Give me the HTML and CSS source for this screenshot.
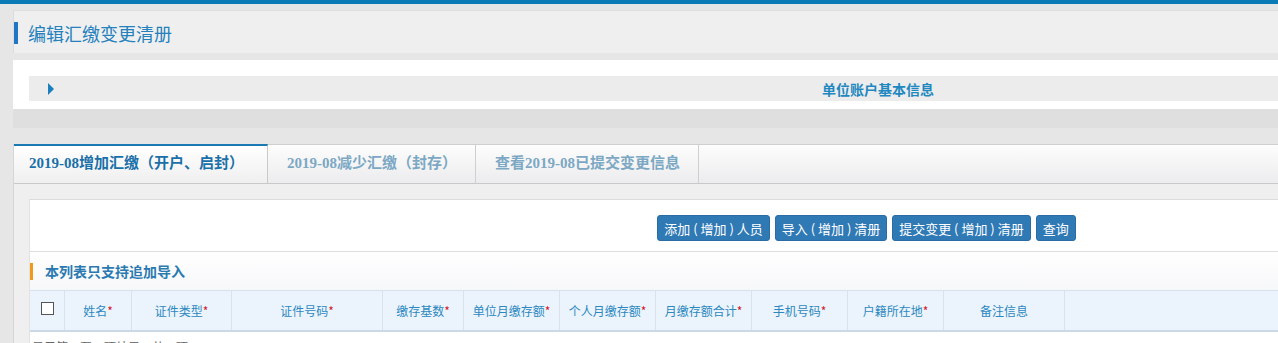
FILE: index.html
```html
<!DOCTYPE html>
<html lang="zh-CN">
  <head>
    <meta charset="UTF-8" />
    <meta name="viewport" content="width=device-width, initial-scale=1.0" />
    <title>编辑汇缴变更清册</title>
    <link rel="stylesheet" href="styles.css">
  </head>
  <body>
    <div class="topbar"></div>
    <div class="page">
      <div class="page-head">
        <h2 class="page-title">编辑汇缴变更清册</h2>
      </div>

      <div class="info-panel">
        <div class="info-bar">
          <span class="caret"></span>
          <span class="info-title">单位账户基本信息</span>
        </div>
      </div>

      <div class="spacer"></div>

      <div class="tabs-panel">
        <ul class="tabs">
          <li class="tab active">2019-08增加汇缴（开户、启封）</li>
          <li class="tab">2019-08减少汇缴（封存）</li>
          <li class="tab">查看2019-08已提交变更信息</li>
        </ul>
        <div class="tab-body">
          <div class="tab-content">
            <div class="toolbar">
              <button type="button" class="btn">添加 ( 增加 ) 人员</button>
              <button type="button" class="btn">导入 ( 增加 ) 清册</button>
              <button type="button" class="btn">提交变更 ( 增加 ) 清册</button>
              <button type="button" class="btn">查询</button>
            </div>
            <div class="section-head">本列表只支持追加导入</div>
            <table class="grid">
              <thead>
                <tr>
                  <th class="col-check"><span class="checkbox"></span></th>
                  <th class="col-name">姓名<span class="req">*</span></th>
                  <th class="col-type">证件类型<span class="req">*</span></th>
                  <th class="col-id">证件号码<span class="req">*</span></th>
                  <th class="col-base">缴存基数<span class="req">*</span></th>
                  <th class="col-amt">单位月缴存额<span class="req">*</span></th>
                  <th class="col-amt">个人月缴存额<span class="req">*</span></th>
                  <th class="col-amt">月缴存额合计<span class="req">*</span></th>
                  <th class="col-amt">手机号码<span class="req">*</span></th>
                  <th class="col-amt">户籍所在地<span class="req">*</span></th>
                  <th class="col-note">备注信息</th>
                  <th class="col-rest"></th>
                </tr>
              </thead>
              <tbody>
                <tr>
                  <td colspan="12" class="empty">显示第 0 至 0 项结果，共 0 项</td>
                </tr>
              </tbody>
            </table>
          </div>
        </div>
      </div>
    </div>
  </body>
</html>
```

FILE: styles.css
```css
body {
  margin: 0;
  background: #e6e6e6;
  font-family: "Noto Sans CJK SC", "Liberation Sans", sans-serif;
  overflow: hidden;
}
.topbar {
  height: 4px;
  background: #0b7bb8;
}
.page {
  width: 1714px;
  margin-left: 13px;
  padding-top: 6px;
}
.page-head {
  background: #efefef;
  border-top: 1px solid #dedede;
  border-left: 1px solid #dcdcdc;
  padding: 11px 0 9px 0;
  margin-bottom: 7px;
}
.page-title {
  margin: 0;
  height: 22px;
  line-height: 22px;
  border-left: 4px solid #1f76c6;
  padding-left: 10px;
  font-size: 18px;
  font-weight: normal;
  color: #2581bd;
}
.info-panel {
  background: #ffffff;
  padding: 16px 0 8px 16px;
}
.info-bar {
  position: relative;
  height: 25px;
  background: #ececec;
  display: flex;
  align-items: center;
  justify-content: center;
}
.caret {
  position: absolute;
  left: 19px;
  top: 7px;
  width: 0;
  height: 0;
  border-top: 6px solid transparent;
  border-bottom: 6px solid transparent;
  border-left: 6px solid #1b7fbd;
}
.info-title {
  font-size: 14px;
  font-weight: bold;
  color: #1f88c0;
}
.spacer {
  height: 19px;
  background: #dfdfdf;
  margin-bottom: 16px;
}
.tabs-panel {
  border-top: 1px solid #cfcfcf;
  border-left: 1px solid #d6d6d6;
  background: #efefef;
}
.tabs {
  list-style: none;
  margin: 0;
  padding: 0;
  display: flex;
  height: 38px;
  background: linear-gradient(#fdfdfd, #ececee);
  border-bottom: 1px solid #c9c9c9;
}
.tab {
  height: 38px;
  line-height: 36px;
  padding: 0 18px 0 19px;
  border-right: 1px solid #cfcfcf;
  font-family: "Liberation Serif", "Noto Sans CJK SC", serif;
  font-size: 15px;
  font-weight: bold;
  color: #7ca8c4;
  box-sizing: border-box;
}
.tab.active {
  border-top: 2px solid #1a78b4;
  height: 39px;
  line-height: 34px;
  margin-top: -1px;
  padding: 0 23px 0 15px;
  color: #1a70a8;
  background: linear-gradient(#ffffff, #efefef);
  border-right-color: #c9c9c9;
}
.tab-body {
  padding: 15px 0 0 15px;
}
.tab-content {
  background: #ffffff;
  border-top: 1px solid #dcdcdc;
  border-left: 1px solid #e2e2e2;
}
.toolbar {
  display: flex;
  justify-content: center;
  gap: 5px;
  padding: 15px 24px 10px 0;
  border-bottom: 1px solid #dedede;
}
.btn {
  height: 26px;
  padding: 0 6px;
  background: #2f79b5;
  border: 1px solid #2a6ca3;
  border-radius: 3px;
  color: #ffffff;
  font-family: "Noto Sans CJK SC", "Liberation Sans", sans-serif;
  font-size: 13px;
  cursor: pointer;
}
.section-head {
  height: 38px;
  line-height: 38px;
  padding-left: 15px;
  position: relative;
  background: linear-gradient(#ffffff, #f6f7f9);
  font-size: 14px;
  font-weight: bold;
  color: #2a7ab1;
}
.section-head::before {
  content: "";
  position: absolute;
  left: 0;
  top: 11px;
  width: 3px;
  height: 17px;
  background: #f09a1a;
}
.grid {
  border-collapse: collapse;
  table-layout: fixed;
  width: 100%;
}
.grid th {
  height: 39px;
  padding: 0;
  background: #ebf4fc;
  border-top: 1px solid #d7e2eb;
  border-bottom: 2px solid #cad9e5;
  border-right: 1px solid #d8e2ea;
  font-size: 12px;
  font-weight: normal;
  color: #2c88c0;
  text-align: center;
}
.grid th.col-rest {
  border-right: none;
}
.col-check { width: 34px; }
.col-name { width: 66px; }
.col-type { width: 99px; }
.col-id { width: 150px; }
.col-base { width: 80px; }
.col-amt { width: 95px; }
.col-note { width: 120px; }
.req {
  color: #d4142c;
}
.checkbox {
  display: inline-block;
  width: 11px;
  height: 11px;
  border: 1px solid #555;
  background: #ffffff;
  margin-top: -8px;
  vertical-align: middle;
}
.grid td.empty {
  padding: 6px 2px;
  font-size: 12px;
  color: #666;
}
```
